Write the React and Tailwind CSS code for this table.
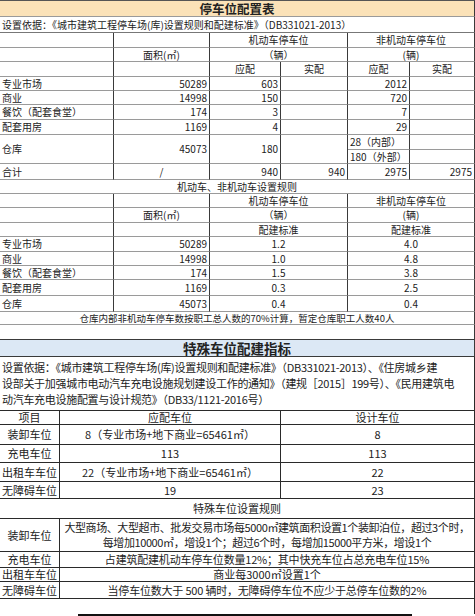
const font = { fontFamily: '"Noto Sans CJK SC", "Noto Sans", sans-serif' };

// top table: thin gray row lines, dark column lines
const c1 = "flex items-center px-[2px] whitespace-nowrap border-r border-b border-r-[#3a3a3a] border-b-[#9a9a9a]";
const L = `${c1} justify-start`;
const R = `${c1} justify-end`;
const C = `${c1} justify-center`;

// special spaces table: black lines
const c3 = "flex items-center whitespace-nowrap border-r border-b border-[#2a2a2a]";

function TopTable() {
  const rows = [
    ["专业市场", "50289", "603", "2012"],
    ["商业", "14998", "150", "720"],
    ["餐饮（配套食堂）", "174", "3", "7"],
    ["配套用房", "1169", "4", "29"],
  ];
  return (
    <div className="grid grid-cols-[114px_96px_71px_67px_62px_65px] grid-rows-[17px_16px_15px_14px_15px_14px_14px_15px_15px_15px_14px_16px] text-[10px] leading-[12px]">
      <div className={`${C} col-span-6 bg-[#fbe2b8] border-t border-t-[#555] text-[12.5px] font-bold leading-[15px]`}>停车位配置表</div>
      <div className={`${L} col-span-6 border-b-[#777]`}>设置依据：《城市建筑工程停车场(库)设置规则和配建标准》（DB331021-2013）</div>

      <div className={L}></div>
      <div className={L}></div>
      <div className={`${C} col-span-2`}>机动车停车位</div>
      <div className={`${C} col-span-2`}>非机动车停车位</div>

      <div className={L}></div>
      <div className={C}>面积(㎡)</div>
      <div className={`${C} col-span-2`}>（辆）</div>
      <div className={`${C} col-span-2`}>(辆)</div>

      <div className={L}></div>
      <div className={L}></div>
      <div className={C}>应配</div>
      <div className={C}>实配</div>
      <div className={C}>应配</div>
      <div className={C}>实配</div>

      {rows.map(r => (
        <div key={r[0]} className="contents">
          <div className={L}>{r[0]}</div>
          <div className={R}>{r[1]}</div>
          <div className={R}>{r[2]}</div>
          <div className={R}></div>
          <div className={R}>{r[3]}</div>
          <div className={R}></div>
        </div>
      ))}

      {/* 仓库 spans two rows */}
      <div className={`${L} row-span-2`}>仓库</div>
      <div className={`${R} row-span-2`}>45073</div>
      <div className={`${R} row-span-2`}>180</div>
      <div className={`${R} row-span-2`}></div>
      <div className={L}>28（内部）</div>
      <div className={L}></div>
      <div className={L}>180（外部）</div>
      <div className={L}></div>

      <div className={L}>合计</div>
      <div className={C}>/</div>
      <div className={R}>940</div>
      <div className={R}>940</div>
      <div className={R}>2975</div>
      <div className={R}>2975</div>
    </div>
  );
}

function RuleTable() {
  const rows = [
    ["专业市场", "50289", "1.2", "4.0"],
    ["商业", "14998", "1.0", "4.8"],
    ["餐饮（配套食堂）", "174", "1.5", "3.8"],
    ["配套用房", "1169", "0.3", "2.5"],
    ["仓库", "45073", "0.4", "0.4"],
  ];
  return (
    <div className="grid grid-cols-[114px_96px_138px_127px] grid-rows-[14px_14px_15px_14px_15px_14px_14px_16px_16px_13px] text-[10px] leading-[12px]">
      <div className={`${C} col-span-4`}>机动车、非机动车设置规则</div>

      <div className={L}></div>
      <div className={L}></div>
      <div className={C}>机动车停车位</div>
      <div className={C}>非机动车停车位</div>

      <div className={L}></div>
      <div className={C}>面积(㎡)</div>
      <div className={C}>（辆）</div>
      <div className={C}>(辆)</div>

      <div className={L}></div>
      <div className={L}></div>
      <div className={C}>配建标准</div>
      <div className={C}>配建标准</div>

      {rows.map(r => (
        <div key={r[0]} className="contents">
          <div className={L}>{r[0]}</div>
          <div className={R}>{r[1]}</div>
          <div className={C}>{r[2]}</div>
          <div className={C}>{r[3]}</div>
        </div>
      ))}

      <div className={`${C} col-span-4 text-[9.5px]`}>仓库内部非机动车停车数按职工总人数的70%计算，暂定仓库职工人数40人</div>
    </div>
  );
}

function SpecialTable() {
  const top = [
    ["装卸车位", "8（专业市场+地下商业=65461㎡）", "8"],
    ["充电车位", "113", "113"],
    ["出租车车位", "22（专业市场+地下商业=65461㎡）", "22"],
    ["无障碍车位", "19", "23"],
  ];
  return (
    <div className="text-[11px] leading-[13px]">
      <div className="grid grid-cols-[60px_221px_194px] grid-rows-[14px_20px_18px_19px_17px]">
        <div className={`${c3} justify-center`}>项目</div>
        <div className={`${c3} justify-center`}>应配车位</div>
        <div className={`${c3} justify-center`}>设计车位</div>
        {top.map(r => (
          <div key={r[0]} className="contents">
            <div className={`${c3} justify-center`}>{r[0]}</div>
            <div className={`${c3} justify-center`}>{r[1]}</div>
            <div className={`${c3} justify-center`}>{r[2]}</div>
          </div>
        ))}
      </div>

      <div className={`${c3} justify-center h-[20px]`}>特殊车位设置规则</div>

      <div className="grid grid-cols-[60px_415px] grid-rows-[33px_16px_14px_17px]">
        <div className={`${c3} justify-center`}>装卸车位</div>
        <div className={`${c3} flex-col justify-center gap-[2px] tracking-[-0.4px]`}>
          <span>大型商场、大型超市、批发交易市场每5000㎡建筑面积设置1个装卸泊位，超过3个时，</span>
          <span>每增加10000㎡，增设1个；超过6个时，每增加15000平方米，增设1个</span>
        </div>
        <div className={`${c3} justify-center`}>充电车位</div>
        <div className={`${c3} justify-center tracking-[-0.2px]`}>占建筑配建机动车停车位数量12%；其中快充车位占总充电车位15%</div>
        <div className={`${c3} justify-center`}>出租车车位</div>
        <div className={`${c3} justify-center`}>商业每3000㎡设置1个</div>
        <div className={`${c3} justify-center`}>无障碍车位</div>
        <div className={`${c3} justify-center tracking-[-0.2px]`}>当停车位数大于 500 辆时，无障碍停车位不应少于总停车位数的2%</div>
      </div>
    </div>
  );
}

export default function App() {
  return (
    <div className="w-[475px] h-[616px] bg-white text-[#222] overflow-hidden" style={font}>
      <TopTable />
      <RuleTable />

      {/* blank spacer row */}
      <div className="h-[15px] border-r border-b border-[#3a3a3a]"></div>

      <div className="h-[17px] flex items-center justify-center bg-[#dce8f5] border-r border-b border-[#3a3a3a] text-[13.5px] font-bold leading-[16px]">
        特殊车位配建指标
      </div>

      <div className="h-[54px] flex flex-col justify-center gap-[3px] pl-[2px] border-r border-b border-[#2a2a2a] text-[11px] leading-[13px] tracking-[-0.3px] whitespace-nowrap">
        <span>设置依据：《城市建筑工程停车场(库)设置规则和配建标准》（DB331021-2013）、《住房城乡建</span>
        <span>设部关于加强城市电动汽车充电设施规划建设工作的通知》（建规［2015］199号）、《民用建筑电</span>
        <span>动汽车充电设施配置与设计规范》（DB33/1121-2016号）</span>
      </div>

      <SpecialTable />

      <div className="h-[15px] border-r border-[#2a2a2a]"></div>
      <div className="h-[2px] ml-[78px] w-[334px] bg-[#111]"></div>
    </div>
  );
}
